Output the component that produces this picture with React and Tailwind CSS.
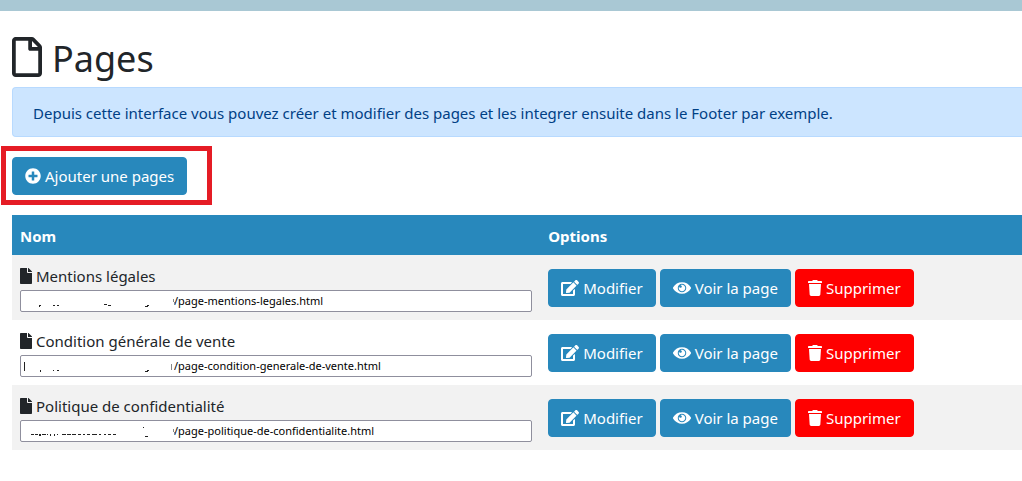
import React from "react";
import { FaEdit, FaFile, FaPlusCircle, FaRegFile } from "react-icons/fa";

const pages = [
  {
    id: "mentions",
    name: "Mentions légales",
    url: "/page-mentions-legales.html",
    traces: "M19 15h2v1h-1v1h-1z M33 15h2v1h-2z M37 15h2v1h-2z M84 14h3v1h-3z M88 15h3v1h-3z M127 15h2v1h-1v1h-3v-1h2z",
    edge: "M153 9h1v3h-1z M154 12h1v3h-1z",
  },
  {
    id: "condition",
    name: "Condition générale de vente",
    url: "/page-condition-generale-de-vente.html",
    traces: "M4 7h1v9h-1z M20 15h1v2h-1z M33 15h1v1h-1z M37 15h2v1h-2z M127 15h2v1h-1v1h-3v-1h2z",
    edge: "M151 9h1v6h-1z",
  },
  {
    id: "politique",
    name: "Politique de confidentialité",
    url: "/page-politique-de-confidentialite.html",
    traces: "M11 14h3v1h-3z M15 14h3v1h-3z M19 14h2v2h-2z M22 14h4v1h-4z M27 14h1v1h-1z M30 14h1v2h-1z M34 14h1v2h-1z M37 14h1v1h-1z M42 14h4v1h-4z M47 14h4v1h-4z M52 14h4v1h-4z M58 14h3v1h-3z M63 14h2v1h-2z M67 14h3v1h-3z M72 14h5v1h-5z M79 14h2v1h-2z M84 14h2v1h-2z M88 14h3v1h-3z M93 14h3v1h-3z M123 7h1v1h-1z M125 16h3v1h-3z",
    edge: "M153 9h1v3h-1z M154 12h1v3h-1z",
  },
];

function EyeIcon({ className }) {
  return (
    <svg viewBox="0 0 576 512" fill="currentColor" className={className}>
      <path d="M569.354 231.631C512.969 135.949 407.81 72 288 72 168.14 72 63.004 135.994 6.646 231.631a47.999 47.999 0 0 0 0 48.739C63.031 376.051 168.19 440 288 440c119.86 0 224.996-63.994 281.354-159.631a47.997 47.997 0 0 0 0-48.738zM288 392c-75.162 0-136-60.827-136-136 0-75.162 60.826-136 136-136 75.162 0 136 60.826 136 136 0 75.162-60.826 136-136 136zm104-136c0 57.438-46.562 104-104 104s-104-46.562-104-104c0-17.708 4.431-34.379 12.236-48.973l-.001.032c0 23.651 19.173 42.823 42.824 42.823s42.824-19.173 42.824-42.823c0-23.651-19.173-42.823-42.824-42.823l-.032.001C253.621 156.431 270.292 152 288 152c57.438 0 104 46.562 104 104z" />
    </svg>
  );
}

function TrashIcon({ className }) {
  return (
    <svg viewBox="0 0 448 512" fill="currentColor" className={className}>
      <path d="M0 84V56c0-13.3 10.7-24 24-24h112l9.4-18.7c4-8.2 12.3-13.3 21.4-13.3h114.3c9.1 0 17.4 5.1 21.5 13.3L312 32h112c13.3 0 24 10.7 24 24v28c0 6.6-5.4 12-12 12H12C5.4 96 0 90.6 0 84zm415.2 56.7L394.8 467c-1.6 25.3-22.6 45-47.9 45H101.1c-25.3 0-46.3-19.7-47.9-45L32.8 140.7c-.4-6.9 5.1-12.7 12-12.7h358.5c6.8 0 12.3 5.8 11.9 12.7z" />
    </svg>
  );
}

function Button({ icon: Icon, iconWidth, danger, children }) {
  return (
    <button
      type="button"
      className={`inline-flex h-[38px] items-center gap-1 whitespace-nowrap rounded border px-3 text-[15px] text-white cursor-pointer ${
        danger ? "border-[#ff0000] bg-[#ff0000]" : "border-[#2888bc] bg-[#2888bc]"
      }`}
    >
      <Icon className={`h-4 shrink-0 ${iconWidth}`} />
      {children}
    </button>
  );
}

function App() {
  return (
    <div className="w-full overflow-x-hidden bg-white font-['Noto_Sans',sans-serif] text-[15px] leading-6 text-[#212529]">
      <header className="h-[11px] bg-[#a9c8d4]" />

      <main className="pl-3 pt-6">
        <h1 className="mb-1 flex h-12 items-start gap-2.5 text-[36px] leading-[48px]">
          <FaRegFile className="mt-0.5 h-10 w-[30px] shrink-0" />
          Pages
        </h1>

        <div className="rounded-l border border-r-0 border-[#b8daff] bg-[#cce5ff] px-5 pb-[11px] pt-[13px] text-[#004085]">
          Depuis cette interface vous pouvez créer et modifier des pages et les
          integrer ensuite dans le Footer par exemple.
        </div>

        <div className="relative my-5 flex">
          <Button icon={FaPlusCircle} iconWidth="w-4">
            Ajouter une pages
          </Button>
          {/* Highlight frame around the add button */}
          <div className="pointer-events-none absolute -left-[11px] -top-[11px] h-[59px] w-[211px] border-[5px] border-[#e51c25]" />
        </div>

        <table className="w-full table-fixed text-left">
          <thead className="bg-[#2888bc] text-white">
            <tr>
              <th className="w-[52.3%] px-2 pb-[7px] pt-[9px] font-bold">Nom</th>
              <th className="px-2 pb-[7px] pt-[9px] font-bold">Options</th>
            </tr>
          </thead>
          <tbody>
            {pages.map((page) => (
              <tr key={page.id} className="odd:bg-[#f2f2f2]">
                <td className="p-2">
                  <label
                    htmlFor={page.id}
                    className="mb-0.5 flex items-center gap-1 pt-px"
                  >
                    <FaFile className="h-4 w-3 shrink-0" />
                    {page.name}
                  </label>
                  <div className="relative">
                    <input
                      id={page.id}
                      type="text"
                      readOnly
                      defaultValue={page.url}
                      className="block h-[22px] w-full rounded-xs border border-[#8f8f9d] bg-white pl-[153px] pr-1 text-[11px] text-black"
                    />
                    {/* Remains of the masked domain */}
                    <svg
                      className="pointer-events-none absolute left-0 top-0"
                      width="160"
                      height="22"
                      viewBox="0 0 160 22"
                      shapeRendering="crispEdges"
                      aria-hidden="true"
                    >
                      <path d={page.traces} fill="#222" />
                      <path d={page.edge} fill="#888" />
                    </svg>
                  </div>
                </td>
                <td className="p-2 align-middle">
                  <div className="flex gap-1">
                    <Button icon={FaEdit} iconWidth="w-[18px]">
                      Modifier
                    </Button>
                    <Button icon={EyeIcon} iconWidth="w-[18px]">
                      Voir la page
                    </Button>
                    <Button icon={TrashIcon} iconWidth="w-3.5" danger>
                      Supprimer
                    </Button>
                  </div>
                </td>
              </tr>
            ))}
          </tbody>
        </table>
      </main>
    </div>
  );
}

export default App;
